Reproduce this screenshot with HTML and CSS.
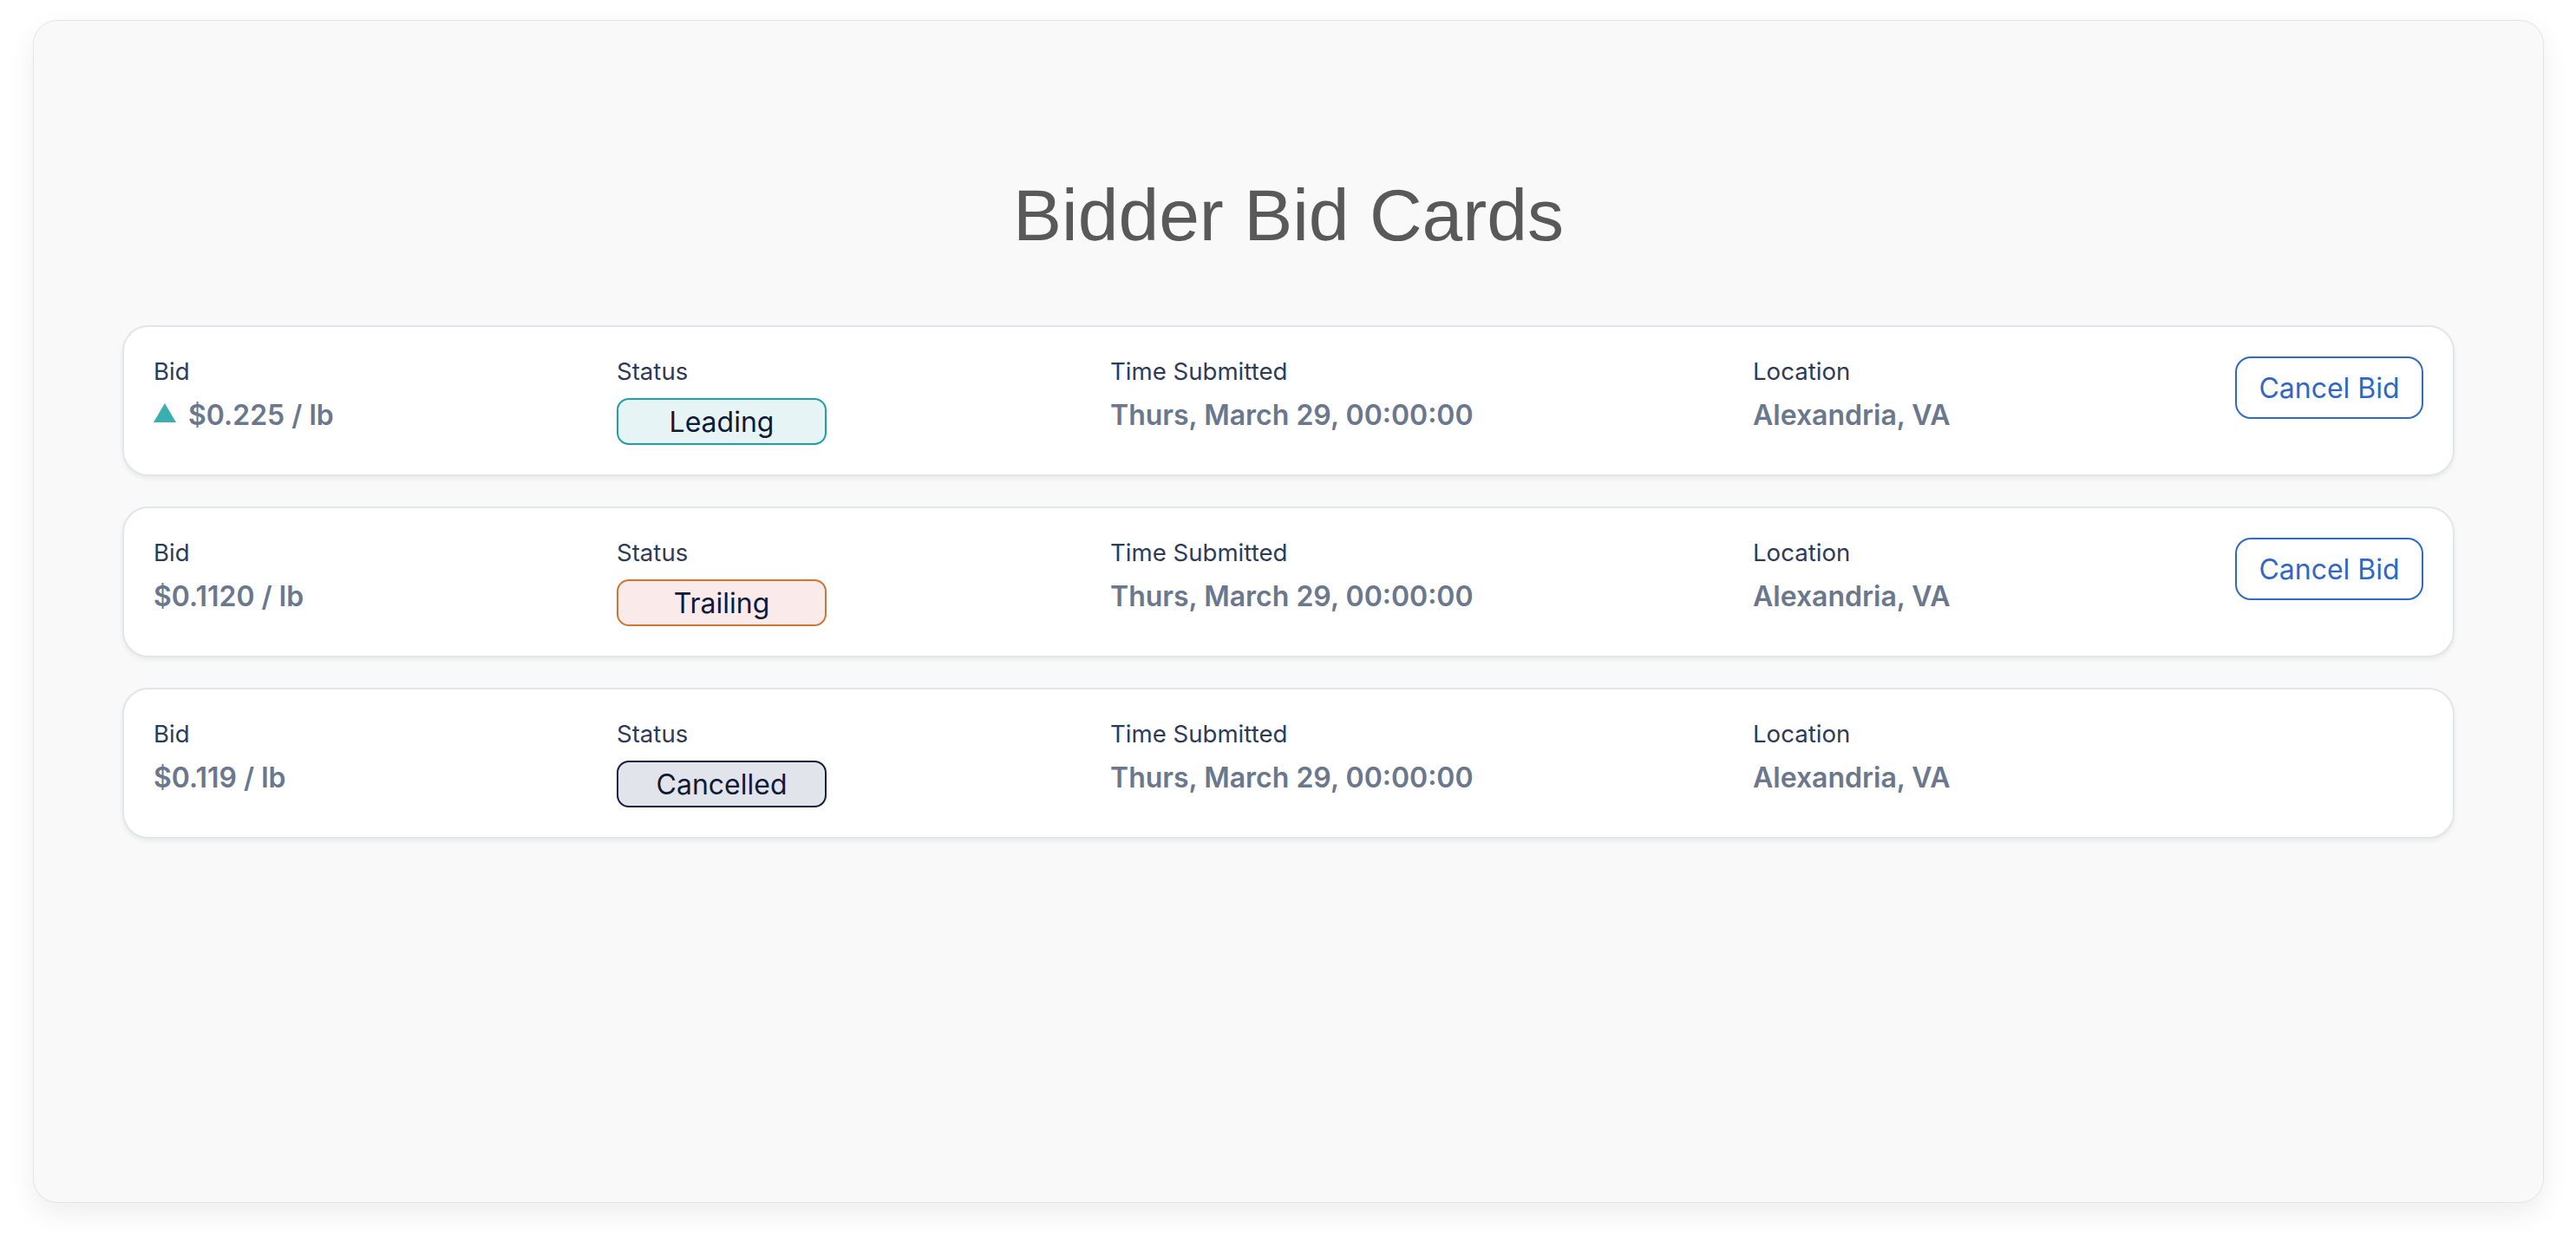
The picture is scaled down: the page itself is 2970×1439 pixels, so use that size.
FILE: index.html
```html
<!DOCTYPE html>
<html lang="en">
<head>
<meta charset="utf-8">
<title>Bidder Bid Cards</title>
<link rel="stylesheet" href="styles.css">
</head>
<body>
<div class="frame">
  <h1 class="title">Bidder Bid Cards</h1>
  <div class="cards">
    <div class="card">
      <div class="field">
        <div class="label">Bid</div>
        <div class="value"><svg class="tri" width="26" height="22" viewBox="0 0 26 22"><polygon points="13,0 26,22 0,22" fill="#3aafb0"/></svg>$0.225 / lb</div>
      </div>
      <div class="field">
        <div class="label">Status</div>
        <div class="badge leading">Leading</div>
      </div>
      <div class="field">
        <div class="label">Time Submitted</div>
        <div class="value">Thurs, March 29, 00:00:00</div>
      </div>
      <div class="field">
        <div class="label">Location</div>
        <div class="value">Alexandria, VA</div>
      </div>
      <button class="cancel">Cancel Bid</button>
    </div>
    <div class="card">
      <div class="field">
        <div class="label">Bid</div>
        <div class="value">$0.1120 / lb</div>
      </div>
      <div class="field">
        <div class="label">Status</div>
        <div class="badge trailing">Trailing</div>
      </div>
      <div class="field">
        <div class="label">Time Submitted</div>
        <div class="value">Thurs, March 29, 00:00:00</div>
      </div>
      <div class="field">
        <div class="label">Location</div>
        <div class="value">Alexandria, VA</div>
      </div>
      <button class="cancel">Cancel Bid</button>
    </div>
    <div class="card">
      <div class="field">
        <div class="label">Bid</div>
        <div class="value">$0.119 / lb</div>
      </div>
      <div class="field">
        <div class="label">Status</div>
        <div class="badge cancelled">Cancelled</div>
      </div>
      <div class="field">
        <div class="label">Time Submitted</div>
        <div class="value">Thurs, March 29, 00:00:00</div>
      </div>
      <div class="field">
        <div class="label">Location</div>
        <div class="value">Alexandria, VA</div>
      </div>
    </div>
  </div>
</div>
</body>
</html>
```
FILE: styles.css
```css
html, body {
  margin: 0;
  background: #ffffff;
}
body {
  padding: 23px 37px 52px 38px;
  font-family: Inter, "Noto Sans", sans-serif;
}
.frame {
  box-sizing: border-box;
  height: 1364px;
  background: #f9f9f9;
  border: 1px solid #e4e4e4;
  border-radius: 28px;
  box-shadow: 0 12px 32px rgba(0, 0, 0, 0.07);
  padding: 176px 102px 0 102px;
}
.title {
  margin: 0 0 78px 0;
  text-align: center;
  font-family: "Liberation Sans", Arial, sans-serif;
  font-weight: 400;
  font-size: 84px;
  color: #595959;
}
.cards {
  display: flex;
  flex-direction: column;
  gap: 35px;
}
.card {
  display: grid;
  grid-template-columns: 534px 569px 741px 1fr auto;
  align-items: start;
  background: #ffffff;
  border: 2px solid #e2e5e9;
  border-radius: 30px;
  padding: 34px;
  box-shadow: 0 3px 5px rgba(30, 40, 60, 0.07);
}
.field {
  display: flex;
  flex-direction: column;
  gap: 14px;
}
.label {
  font-size: 27.6px;
  line-height: 34px;
  color: #2d3b59;
  font-weight: 400;
}
.value {
  font-size: 32px;
  line-height: 40px;
  font-weight: 600;
  color: #6a778d;
  display: flex;
  align-items: center;
  gap: 14px;
}
.tri {
  position: relative;
  top: -3px;
}
.badge {
  box-sizing: border-box;
  width: 242px;
  height: 54px;
  border: 2px solid;
  border-radius: 14px;
  display: flex;
  align-items: center;
  justify-content: center;
  font-size: 32px;
  color: #0f1a3a;
}
.leading {
  border-color: #1fa0a5;
  background: #e6f4f5;
}
.trailing {
  border-color: #cc7636;
  background: #fbeaea;
}
.cancelled {
  border-color: #15203e;
  background: #e1e5eb;
}
.cancel {
  box-sizing: border-box;
  width: 217px;
  height: 72px;
  border: 2px solid #2f6bc6;
  border-radius: 18px;
  background: #ffffff;
  color: #2f68c4;
  font-family: Inter, "Noto Sans", sans-serif;
  font-size: 32px;
  font-weight: 400;
  padding: 0;
}
```
